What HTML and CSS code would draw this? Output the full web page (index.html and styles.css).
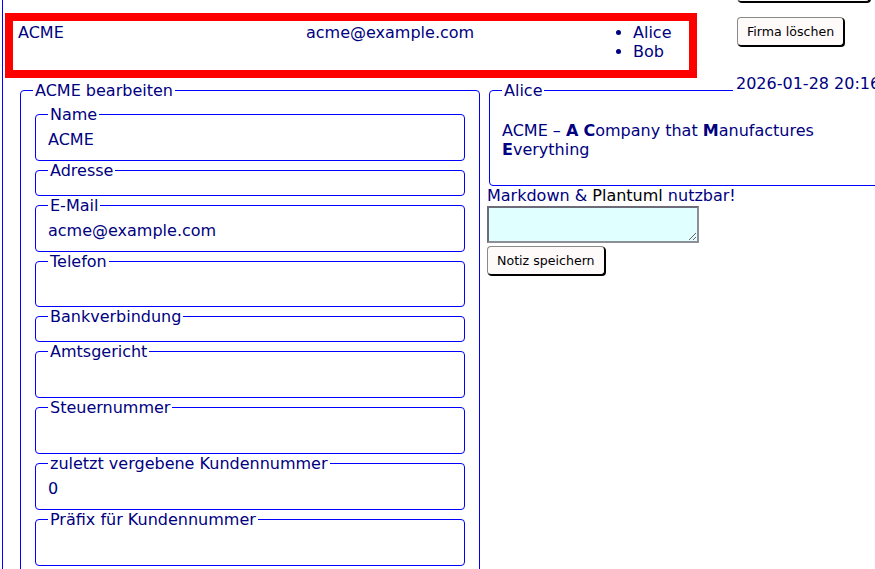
FILE: index.html
```html
<!DOCTYPE html>
<html lang="de">
<head>
<meta charset="utf-8">
<title>ACME bearbeiten</title>
<link rel="stylesheet" href="styles.css">
</head>
<body>
<div class="page">
  <div class="top">
    <div class="summary">
      <div class="summary-name">ACME</div>
      <div class="summary-mail">acme@example.com</div>
      <ul class="summary-contacts">
        <li>Alice</li>
        <li>Bob</li>
      </ul>
    </div>
    <div class="actions">
      <button class="btn btn-wide" type="button">Kontakt anlegen</button>
      <button class="btn btn-delete" type="button">Firma löschen</button>
    </div>
  </div>

  <div class="main">
    <form class="company-form">
      <fieldset class="group">
        <legend>ACME bearbeiten</legend>
        <fieldset class="field"><legend>Name</legend><div class="val">ACME</div></fieldset>
        <fieldset class="field"><legend>Adresse</legend></fieldset>
        <fieldset class="field"><legend>E-Mail</legend><div class="val">acme@example.com</div></fieldset>
        <fieldset class="field"><legend>Telefon</legend><div class="val"></div></fieldset>
        <fieldset class="field"><legend>Bankverbindung</legend></fieldset>
        <fieldset class="field"><legend>Amtsgericht</legend><div class="val"></div></fieldset>
        <fieldset class="field"><legend>Steuernummer</legend><div class="val"></div></fieldset>
        <fieldset class="field"><legend>zuletzt vergebene Kundennummer</legend><div class="val">0</div></fieldset>
        <fieldset class="field"><legend>Präfix für Kundennummer</legend><div class="val"></div></fieldset>
      </fieldset>
    </form>

    <div class="notes">
      <span class="note-date">2026-01-28 20:16</span>
      <fieldset class="note">
        <legend>Alice</legend>
        <p>ACME – <b>A</b> <b>C</b>ompany that <b>M</b>anufactures <b>E</b>verything</p>
      </fieldset>
      <div class="note-hint">Markdown &amp; <span class="hint-link">Plantuml</span> nutzbar!</div>
      <textarea class="note-input"></textarea>
      <button class="btn btn-save" type="button">Notiz speichern</button>
    </div>
  </div>
</div>
</body>
</html>
```

FILE: styles.css
```css
html {
  overflow: hidden;
}

body {
  margin: 0;
  font-family: "DejaVu Sans", sans-serif;
  font-size: 16px;
  line-height: 19px;
  color: #000080;
  background: #fff;
}

.page {
  margin-left: 2px;
  padding-left: 2px;
  border-left: 1px solid #0000ff;
  min-height: 600px;
}

/* header row: company summary + actions */
.top {
  display: flex;
  align-items: flex-start;
}

.summary {
  margin-top: 13px;
  width: 692px;
  height: 65px;
  box-sizing: border-box;
  border: 8px solid #ff0000;
  padding: 2px 5px 0;
  display: grid;
  grid-template-columns: 288px 287px 1fr;
  align-items: start;
}

.summary-contacts {
  margin: 0;
  padding-left: 40px;
}

.actions {
  display: flex;
  flex-direction: column;
  align-items: flex-start;
  margin-left: 40px;
}

.btn {
  font-family: "DejaVu Sans", sans-serif;
  font-size: 12.6px;
  line-height: 16px;
  color: #000;
  background: #fffafa;
  border: 1px solid #8a8a8a;
  border-right-color: #000;
  border-bottom-color: #000;
  border-radius: 4px;
  box-shadow: 1px 1px 0 #000;
  padding: 6px 9px 5px;
  cursor: pointer;
}

.btn-wide {
  width: 133px;
  margin-top: -27px;
}

.btn-delete {
  margin-top: 15px;
}

/* main row: form + notes */
.main {
  display: flex;
  align-items: flex-start;
  margin-top: 3px;
}

.company-form {
  margin: 0 0 0 15px;
}

fieldset {
  border: 1px solid #0000ff;
  border-radius: 4px;
  padding: 5px 12px 10px;
  margin: 0 2px;
}

legend {
  padding: 0 2px;
  line-height: 19px;
}

.group {
  width: 460px;
  box-sizing: border-box;
  margin: 0;
}

.val {
  line-height: 20px;
  padding-top: 0.8px;
  min-height: 20px;
}

.notes {
  position: relative;
  margin-left: 7px;
  width: 400px;
  flex: none;
}

.note {
  margin: 0 2px;
}

.note p {
  margin: 16px 0;
}

.note-date {
  position: absolute;
  top: -7px;
  left: 246px;
  padding: 0 3px;
  background: #fff;
  white-space: nowrap;
  z-index: 1;
}

.hint-link {
  color: #000;
}

.note-input {
  display: block;
  box-sizing: border-box;
  width: 212px;
  height: 37px;
  margin: 1px 0 0;
  background: #e0ffff;
  border: 2px solid #6c6c78;
  border-right-color: #8e8e96;
  border-bottom-color: #8e8e96;
  padding: 2px;
  font-family: "DejaVu Sans", sans-serif;
  font-size: 13px;
}

.btn-save {
  display: block;
  margin-top: 3px;
}
```
